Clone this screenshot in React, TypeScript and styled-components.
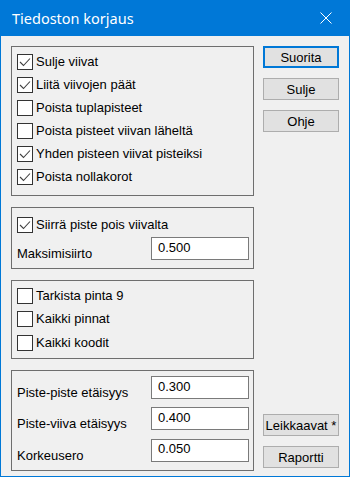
import React, { useState } from 'react';
import styled, { createGlobalStyle } from 'styled-components';

const GlobalStyle = createGlobalStyle`
  html, body {
    margin: 0;
    padding: 0;
    background: #f0f0f0;
  }
  * {
    box-sizing: border-box;
  }
`;

const Window = styled.div`
  width: 350px;
  height: 477px;
  border: 1px solid #0078d7;
  border-top: none;
  background: #f0f0f0;
  display: flex;
  flex-direction: column;
  font-family: 'Liberation Sans', Arial, sans-serif;
  font-size: 13px;
  color: #000;
`;

const TitleBar = styled.div`
  height: 36px;
  margin: 0 -1px;
  background: #0078d7;
  color: #fff;
  display: flex;
  align-items: center;
  justify-content: space-between;
  padding: 0 18px 0 12px;
  font-family: 'Noto Sans', 'Open Sans', sans-serif;
  font-size: 14.5px;
  flex-shrink: 0;
`;

const CloseIcon = styled.svg`
  width: 12px;
  height: 12px;
  display: block;
`;

const Body = styled.div`
  flex: 1;
  display: flex;
  gap: 9px;
  padding: 10px 10px 0 10px;
`;

const LeftColumn = styled.div`
  width: 243px;
  display: flex;
  flex-direction: column;
  gap: 11px;
`;

const RightColumn = styled.div`
  width: 76px;
  display: flex;
  flex-direction: column;
`;

const Panel = styled.div<{ $h: number; $pt: number }>`
  height: ${p => p.$h}px;
  border: 1px solid #6e6e6e;
  padding: ${p => p.$pt}px 4px 0 5px;
  display: flex;
  flex-direction: column;
`;

const CheckRow = styled.label<{ $h: number }>`
  height: ${p => p.$h}px;
  display: flex;
  align-items: flex-start;
  gap: 3px;
  cursor: default;
`;

const Box = styled.span`
  width: 16px;
  height: 16px;
  border: 1px solid #333;
  background: #fff;
  flex-shrink: 0;
  display: flex;
  align-items: center;
  justify-content: center;
`;

const CheckText = styled.span`
  line-height: 16px;
`;

const FieldRow = styled.div<{ $h: number }>`
  height: ${p => p.$h}px;
  display: flex;
  align-items: flex-start;
  justify-content: space-between;
`;

const FieldLabel = styled.span`
  padding-top: 9px;
  line-height: 16px;
`;

const Input = styled.input`
  width: 98px;
  height: 23px;
  border: 1px solid #7a7a7a;
  background: #fff;
  font-family: 'Liberation Sans', Arial, sans-serif;
  font-size: 13px;
  padding: 0 0 3px 6px;
  color: #000;
  outline: none;
`;

const Button = styled.button<{ $default?: boolean; $mb?: number }>`
  width: 76px;
  height: 22px;
  background: #e1e1e1;
  border: ${p => (p.$default ? '2px solid #0078d7' : '1px solid #adadad')};
  font-family: 'Liberation Sans', Arial, sans-serif;
  font-size: 13px;
  color: #000;
  padding: 0;
  white-space: nowrap;
  margin-bottom: ${p => p.$mb ?? 10}px;
`;

const Spacer = styled.div`
  flex: 1;
`;

const CheckMark = () => (
  <svg width="12" height="10" viewBox="0 0 12 10">
    <polyline points="1,5 4.5,8.5 11,1.5" fill="none" stroke="#404040" strokeWidth="1.1" />
  </svg>
);

const Check: React.FC<{ label: string; initial: boolean; h?: number }> = ({ label, initial, h = 23 }) => {
  const [on, setOn] = useState(initial);
  return (
    <CheckRow $h={h} onClick={() => setOn(!on)}>
      <Box>{on && <CheckMark />}</Box>
      <CheckText>{label}</CheckText>
    </CheckRow>
  );
};

const Field: React.FC<{ label: string; value: string; h?: number }> = ({ label, value, h = 32 }) => (
  <FieldRow $h={h}>
    <FieldLabel>{label}</FieldLabel>
    <Input defaultValue={value} />
  </FieldRow>
);

export default function App() {
  return (
    <>
      <GlobalStyle />
      <Window>
        <TitleBar>
          <span>Tiedoston korjaus</span>
          <CloseIcon viewBox="0 0 12 12">
            <path d="M0.5 0.5 L11.5 11.5 M11.5 0.5 L0.5 11.5" stroke="#fff" strokeWidth="1" />
          </CloseIcon>
        </TitleBar>
        <Body>
          <LeftColumn>
            <Panel $h={150} $pt={7}>
              <Check label="Sulje viivat" initial={true} />
              <Check label="Liitä viivojen päät" initial={true} />
              <Check label="Poista tuplapisteet" initial={false} />
              <Check label="Poista pisteet viivan läheltä" initial={false} />
              <Check label="Yhden pisteen viivat pisteiksi" initial={true} />
              <Check label="Poista nollakorot" initial={true} />
            </Panel>
            <Panel $h={62} $pt={9}>
              <Check label="Siirrä piste pois viivalta" initial={true} h={21} />
              <Field label="Maksimisiirto" value="0.500" />
            </Panel>
            <Panel $h={79} $pt={7}>
              <Check label="Tarkista pinta 9" initial={false} h={24} />
              <Check label="Kaikki pinnat" initial={false} h={24} />
              <Check label="Kaikki koodit" initial={false} h={24} />
            </Panel>
            <Panel $h={101} $pt={5}>
              <Field label="Piste-piste etäisyys" value="0.300" />
              <Field label="Piste-viiva etäisyys" value="0.400" />
              <Field label="Korkeusero" value="0.050" />
            </Panel>
          </LeftColumn>
          <RightColumn>
            <Button $default>Suorita</Button>
            <Button>Sulje</Button>
            <Button>Ohje</Button>
            <Spacer />
            <Button>Leikkaavat *</Button>
            <Button $mb={8}>Raportti</Button>
          </RightColumn>
        </Body>
      </Window>
    </>
  );
}
